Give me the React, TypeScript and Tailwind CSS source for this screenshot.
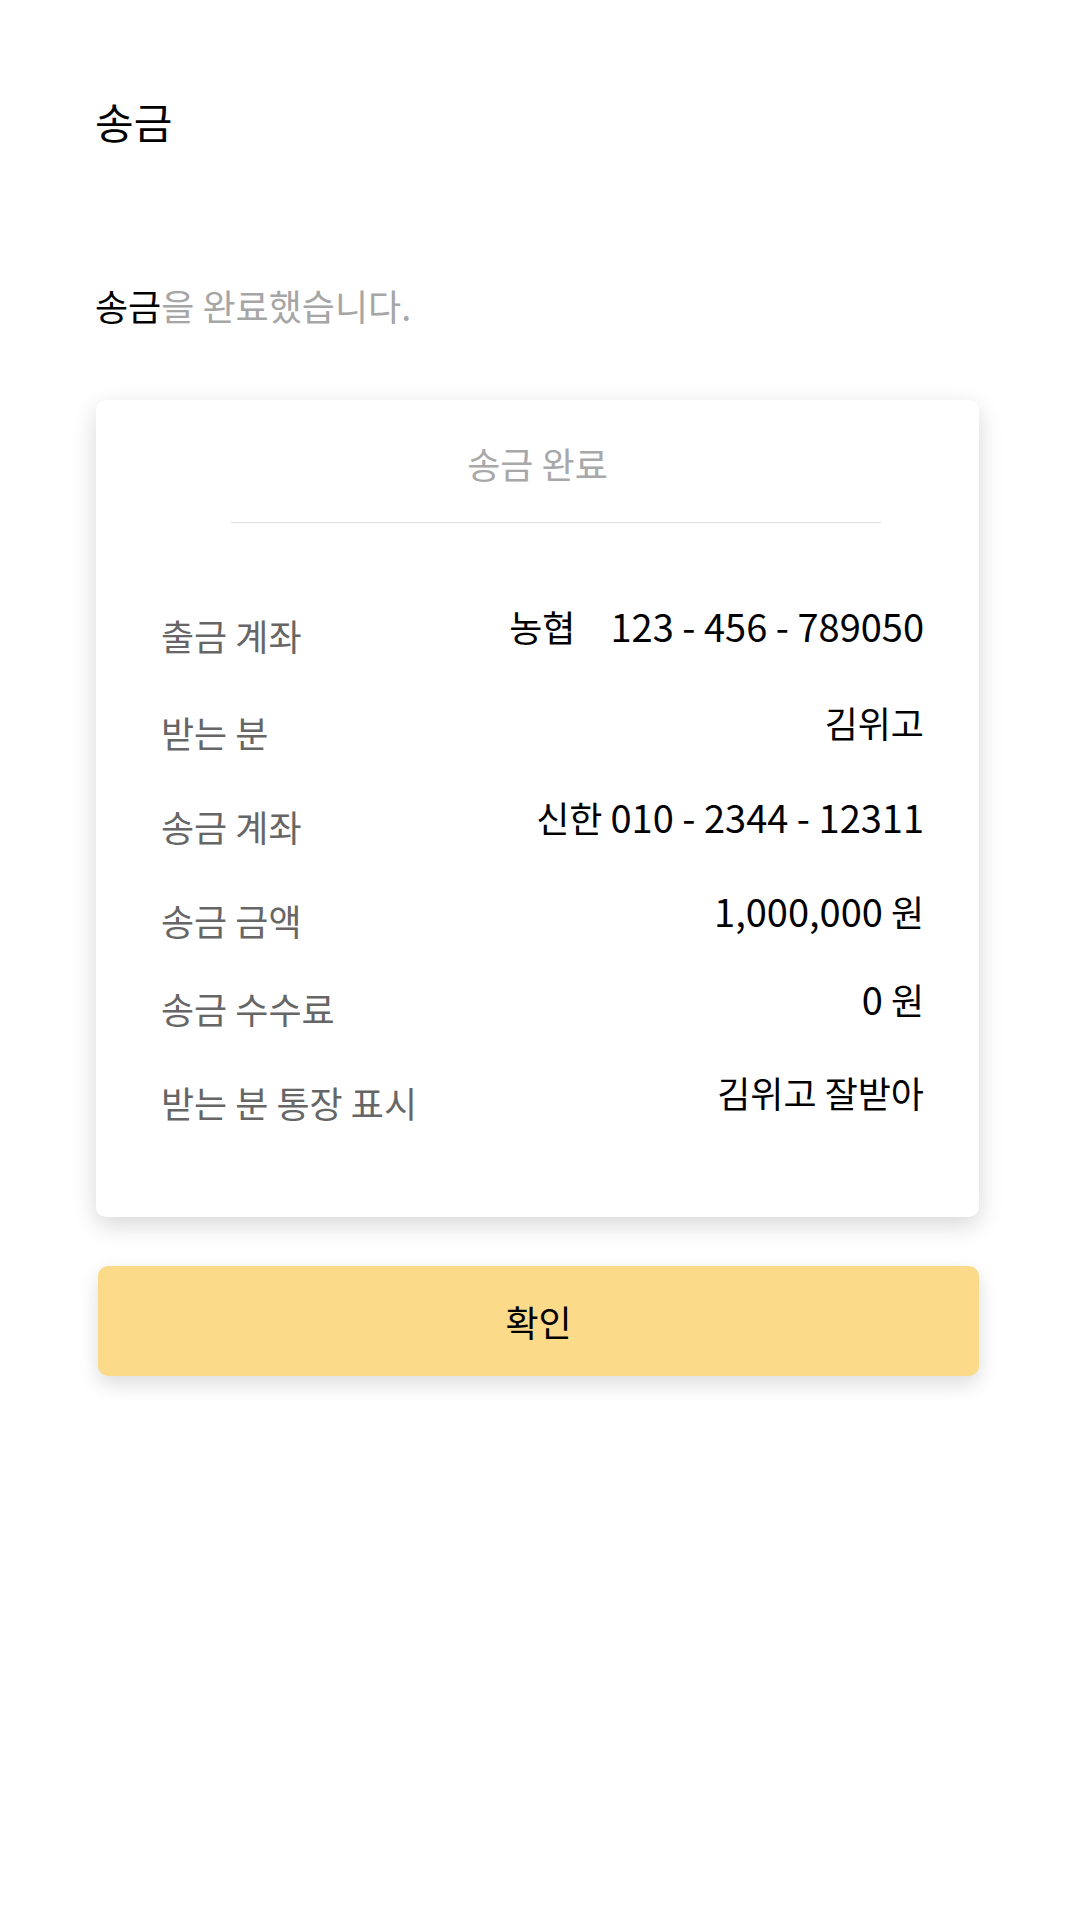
import { FC, ReactNode } from "react";

// 숫자 부분은 한글보다 살짝 크게 보여서 따로 감싼다
const Num: FC<{ children: ReactNode }> = ({ children }) => (
  <span className="text-[38px]">{children}</span>
);

type Row = { id: number; label: string; value: ReactNode; height: string };

const rows: Row[] = [
  {
    id: 1,
    label: "출금 계좌",
    value: (
      <>
        농협
        <span className="ml-[35px]">
          <Num>123 - 456 - 789050</Num>
        </span>
      </>
    ),
    height: "h-[97px]",
  },
  { id: 2, label: "받는 분", value: "김위고", height: "h-[94px]" },
  {
    id: 3,
    label: "송금 계좌",
    value: (
      <>
        신한 <Num>010 - 2344 - 12311</Num>
      </>
    ),
    height: "h-[94px]",
  },
  {
    id: 4,
    label: "송금 금액",
    value: (
      <>
        <Num>1,000,000</Num> 원
      </>
    ),
    height: "h-[88px]",
  },
  {
    id: 5,
    label: "송금 수수료",
    value: (
      <>
        <Num>0</Num> 원
      </>
    ),
    height: "h-[94px]",
  },
  { id: 6, label: "받는 분 통장 표시", value: "김위고 잘받아", height: "h-[94px]" },
];

const App: FC = () => {
  return (
    <div
      className="w-full min-h-[1920px] bg-white text-black"
      style={{ fontFamily: '"Noto Sans CJK KR", "Noto Sans", sans-serif' }}
    >
      <div className="pl-[95px] pt-[100px]">
        <h1 className="text-[42px] leading-none font-normal">송금</h1>
        <p className="mt-[145px] text-[36px] leading-none text-[#a6a6a6]">
          <span className="text-black">송금</span>을 완료했습니다.
        </p>
      </div>

      <div className="ml-[96px] w-[883px] mt-[77px] bg-white rounded-[10px] shadow-[0_8px_24px_rgba(0,0,0,0.16)] pt-[45px] pb-[49px]">
        <div className="text-center text-[36px] leading-none text-[#a8a8a8]">송금 완료</div>
        <div className="ml-[135px] mr-[98px] mt-[41px] h-px bg-[#dddddd]" />
        <div className="mt-[84px] pl-[65px] pr-[55px]">
          {rows.map(({ id, label, value, height }) => (
            <div key={id} className={`flex justify-between items-start ${height}`}>
              <span className="pt-[10px] text-[36px] leading-none text-[#666666]">{label}</span>
              <span className="text-[36px] leading-none text-black whitespace-nowrap">{value}</span>
            </div>
          ))}
        </div>
      </div>

      <button className="ml-[98px] mt-[49px] w-[881px] h-[110px] rounded-[10px] bg-[#fbda8a] shadow-[0_8px_20px_rgba(0,0,0,0.14)] text-[36px] leading-none text-black">
        확인
      </button>
    </div>
  );
};

export default App;
